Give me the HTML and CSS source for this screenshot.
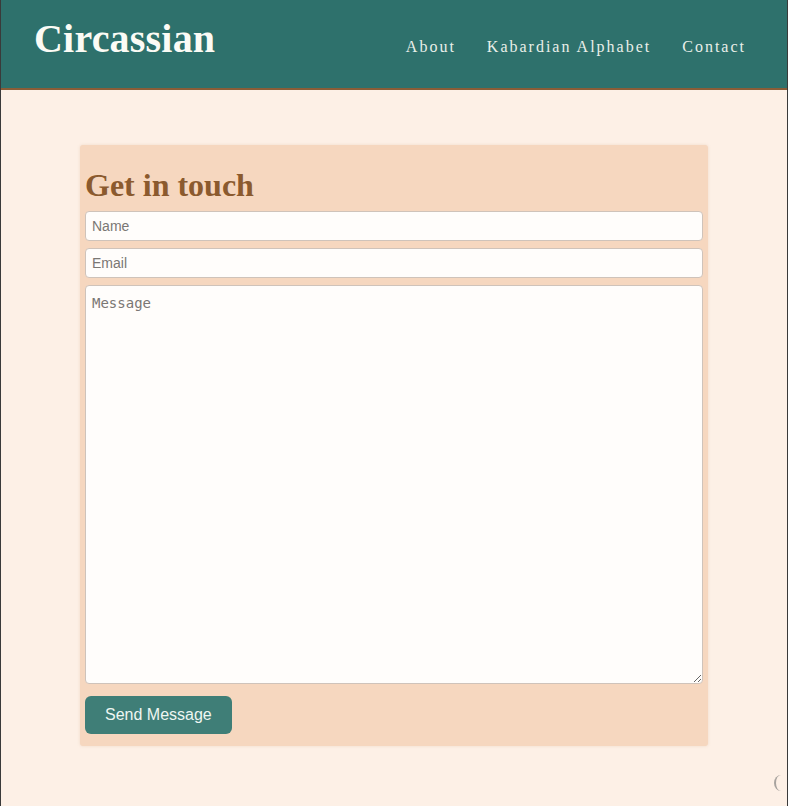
FILE: index.html
```html
<!DOCTYPE html>
<html lang="en">
<head>
<meta charset="utf-8">
<title>Circassian — Contact</title>
<link rel="stylesheet" href="styles.css">
</head>
<body>
<div class="page">
  <header class="site-header">
    <h1 class="brand">Circassian</h1>
    <nav class="nav">
      <a href="#">About</a>
      <a href="#">Kabardian Alphabet</a>
      <a href="#">Contact</a>
    </nav>
  </header>
  <main class="main">
    <section class="card">
      <h2 class="card-title">Get in touch</h2>
      <form class="form">
        <input class="field" type="text" placeholder="Name">
        <input class="field" type="email" placeholder="Email">
        <textarea class="field area" placeholder="Message"></textarea>
        <div class="actions"><button class="btn" type="button">Send Message</button></div>
      </form>
    </section>
  </main>
  <div class="peek"></div>
</div>
</body>
</html>
```
FILE: styles.css
```css
* { box-sizing: border-box; }
html, body { margin: 0; padding: 0; }
body { background: #fdf0e6; }
.page {
  min-height: 100vh;
  border-left: 1px solid #3a3a3a;
  border-right: 1px solid #3a3a3a;
  background: #fdf0e6;
  font-family: "Liberation Serif", "Times New Roman", serif;
}
.site-header {
  background: #2e716c;
  border-bottom: 2px solid #8a5d37;
  height: 90px;
  display: flex;
  align-items: flex-start;
  justify-content: space-between;
  padding: 0 41px 0 33px;
}
.brand {
  margin: 15px 0 0;
  font-size: 40px;
  line-height: 48px;
  font-weight: bold;
  color: #fbfbf5;
  letter-spacing: 0.2px;
}
.nav {
  display: flex;
  gap: 31px;
  margin-top: 37px;
}
.nav a {
  color: #e9efe9;
  text-decoration: none;
  font-size: 16px;
  line-height: 20px;
  letter-spacing: 2px;
}
.main {
  padding-top: 55px;
  display: flex;
  justify-content: center;
}
.card {
  width: 628px;
  background: #f6d7bf;
  border-radius: 3px;
  padding: 5px 5px 12px;
  box-shadow: 0 0 3px rgba(200, 150, 110, 0.25);
}
.card-title {
  margin: 17px 0 7px 0;
  font-size: 32px;
  line-height: 37px;
  font-weight: bold;
  color: #8b5a2e;
}
.form {
  display: flex;
  flex-direction: column;
  gap: 7px;
}
.field {
  display: block;
  width: 100%;
  height: 30px;
  margin: 0;
  border: 1px solid #cfc3ba;
  border-radius: 4px;
  background: #fffdfb;
  padding: 0 6px;
  font-family: "Liberation Sans", Arial, sans-serif;
  font-size: 14px;
  color: #333;
}
.field::placeholder { color: #7a7774; }
.area {
  height: 399px;
  padding: 9px 6px;
  font-family: "DejaVu Sans Mono", monospace;
  font-size: 14px;
  resize: vertical;
}
.actions { padding-top: 5px; }
.btn {
  display: block;
  height: 38px;
  padding: 0 20px;
  border: none;
  border-radius: 6px;
  background: #3f7e77;
  color: #eef6f2;
  font-family: "Liberation Sans", Arial, sans-serif;
  font-size: 16px;
}
.peek {
  position: fixed;
  left: 774px;
  top: 775px;
  width: 14px;
  height: 16px;
  border-left: 2px solid #a8a39f;
  border-radius: 50% 0 0 50%;
}
```
